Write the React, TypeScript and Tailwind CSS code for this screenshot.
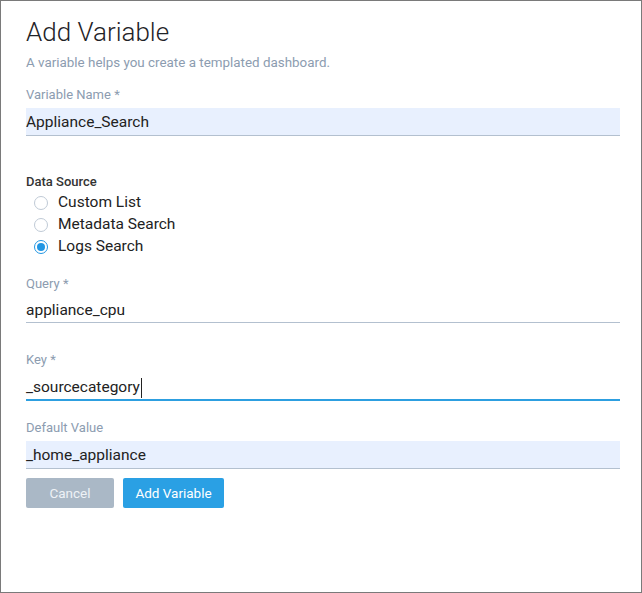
import type { JSX } from 'react';

interface FieldProps {
  label: string;
  required?: boolean;
  value: string;
  variant: 'filled' | 'plain' | 'focused';
  className?: string;
}

const Field = ({ label, required, value, variant, className = '' }: FieldProps): JSX.Element => {
  const box =
    variant === 'filled'
      ? 'h-[28px] bg-[#e8f0fe] border-b border-[#b3c0cf]'
      : variant === 'focused'
        ? 'h-[28px] border-b-2 border-[#2d9fe0]'
        : 'h-[26px] border-b border-[#b3c0cf]';
  return (
    <div className={className}>
      <div className="text-[13px] leading-[16px] text-[#8c9cb0]">
        {label}
        {required && <span> *</span>}
      </div>
      <div className={`mt-[5px] flex items-center pt-[3px] text-[15.5px] text-[#222] ${box}`}>
        <span>{value}</span>
        {variant === 'focused' && <span className="ml-[1px] h-[20px] w-[1px] bg-[#222]" />}
      </div>
    </div>
  );
};

const Radio = ({ label, checked }: { label: string; checked?: boolean }): JSX.Element => (
  <div className="flex h-[22px] items-center gap-[10px] pl-[8px]">
    <span
      className={`flex h-[14px] w-[14px] items-center justify-center rounded-full border ${
        checked ? 'border-[#2196e3]' : 'border-[#bfcad6]'
      }`}
    >
      {checked && <span className="h-[8px] w-[8px] rounded-full bg-[#2196e3]" />}
    </span>
    <span className="text-[15.5px] text-[#222]">{label}</span>
  </div>
);

export default function App(): JSX.Element {
  return (
    <div className="h-[593px] w-[642px] border border-[#7a7a7a] bg-white pl-[25px] pr-[21px] font-['Roboto',sans-serif]">
      <h1 className="mt-[15px] text-[26px] font-light leading-[32px] text-[#1f2328]">Add Variable</h1>
      <p className="mt-[7px] text-[13.4px] leading-[16px] text-[#8c9cb0]">A variable helps you create a templated dashboard.</p>

      <Field className="mt-[16px]" label="Variable Name" required value="Appliance_Search" variant="filled" />

      <div className="mt-[38px] text-[13px] font-medium leading-[16px] text-[#333]">Data Source</div>
      <div className="mt-[2px] flex flex-col">
        <Radio label="Custom List" />
        <Radio label="Metadata Search" />
        <Radio label="Logs Search" checked />
      </div>

      <Field className="mt-[18px]" label="Query" required value="appliance_cpu" variant="plain" />
      <Field className="mt-[29px]" label="Key" required value="_sourcecategory" variant="focused" />
      <Field className="mt-[19px]" label="Default Value" value="_home_appliance" variant="filled" />

      <div className="mt-[9px] flex gap-[9px]">
        <button className="h-[30px] w-[88px] rounded-[2px] bg-[#aab8c6] text-[13.5px] text-[#eef2f6]">Cancel</button>
        <button className="h-[30px] w-[101px] rounded-[2px] bg-[#2aa0e4] text-[13.5px] text-white">Add Variable</button>
      </div>
    </div>
  );
}
